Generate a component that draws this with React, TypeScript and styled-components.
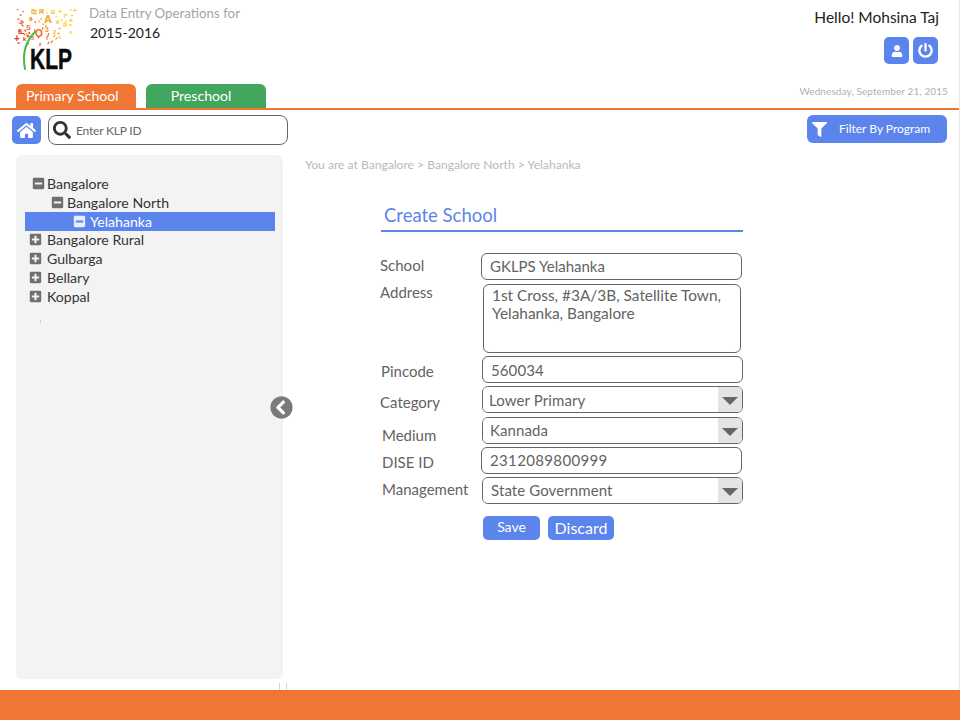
import { createGlobalStyle, styled } from "styled-components";
import {
  FaChevronCircleLeft,
  FaFilter,
  FaHome,
  FaMinusSquare,
  FaPlusSquare,
  FaPowerOff,
  FaSearch,
  FaUser,
} from "react-icons/fa";

const BLUE = "#5b84ec";
const ORANGE = "#f07636";

const GlobalStyle = createGlobalStyle`
  html, body {
    margin: 0;
    padding: 0;
    background: #fff;
    overflow: hidden;
  }
  body, input, textarea, select, button {
    font-family: Lato, "Liberation Sans", sans-serif;
  }
  * {
    box-sizing: border-box;
  }
`;

const Page = styled.div`
  position: relative;
  display: flex;
  flex-direction: column;
  width: 960px;
  height: 720px;
  border-right: 1px solid #e9e9e9;
`;

const Header = styled.header`
  display: flex;
  justify-content: space-between;
  height: 110px;
  border-bottom: 2px solid ${ORANGE};
`;

const HeaderLeft = styled.div`
  display: flex;
  flex-direction: column;
  padding: 6px 0 0 14px;
`;

const Brand = styled.div`
  display: flex;
  height: 78px;
`;

const BrandText = styled.div`
  padding-top: 0;
`;

const Caption = styled.div`
  font-size: 13.3px;
  line-height: 14px;
  color: #a4a4a4;
`;

const YearText = styled.div`
  font-size: 14px;
  line-height: 17px;
  margin: 4px 0 0 1px;
  color: #222;
`;

const Tabs = styled.div`
  display: flex;
  gap: 10px;
  padding-left: 2px;
`;

const Tab = styled.div<{ $color: string; $center?: boolean }>`
  width: 120px;
  height: 24px;
  padding: ${(p) => (p.$center ? "0 10px 0 0" : "0 0 0 10px")};
  border-radius: 6px 6px 0 0;
  background: ${(p) => p.$color};
  color: #fff;
  font-size: 14.1px;
  line-height: 23px;
  text-align: ${(p) => (p.$center ? "center" : "left")};
`;

const HeaderRight = styled.div`
  display: flex;
  flex-direction: column;
  align-items: flex-end;
  padding: 8px 11px 0 0;
`;

const Greeting = styled.div`
  font-size: 15.5px;
  line-height: 19px;
  margin-right: 9px;
  color: #222;
`;

const UserActions = styled.div`
  display: flex;
  gap: 4px;
  margin: 10px 10px 0 0;
`;

const IconButton = styled.div<{ $size: number }>`
  display: flex;
  align-items: center;
  justify-content: center;
  width: 25px;
  height: 27px;
  border-radius: 5px;
  background: ${BLUE};
  color: #fff;
  font-size: ${(p) => p.$size}px;
`;

const DateText = styled.div`
  margin-top: 21px;
  font-size: 10px;
  line-height: 12px;
  letter-spacing: 0.1px;
  color: #b0b0b0;
`;

const Toolbar = styled.div`
  display: flex;
  align-items: flex-start;
  height: 45px;
  padding: 5px 12px 0 12px;
`;

const HomeButton = styled.div`
  display: flex;
  align-items: center;
  justify-content: center;
  width: 29px;
  height: 28px;
  margin-top: 1px;
  border-radius: 5px;
  background: ${BLUE};
  color: #fff;
  font-size: 19px;
`;

const SearchBox = styled.div`
  display: flex;
  align-items: center;
  gap: 5px;
  width: 240px;
  height: 30px;
  margin-left: 7px;
  padding-left: 4px;
  border: 1px solid #666;
  border-radius: 8px;
  color: #333;
  font-size: 18px;
`;

const SearchInput = styled.input`
  flex: 1;
  min-width: 0;
  border: 0;
  outline: 0;
  padding: 0;
  background: transparent;
  font-size: 12px;
  letter-spacing: -0.2px;
  &::placeholder {
    color: #666;
    opacity: 1;
  }
`;

const FilterButton = styled.div`
  display: flex;
  align-items: center;
  width: 140px;
  height: 28px;
  margin-left: auto;
  padding: 0 0 2px 5px;
  border-radius: 6px;
  background: ${BLUE};
  color: #fff;
  font-size: 12px;
  svg {
    font-size: 15px;
    margin: 2px 12px 0 0;
  }
`;

const Body = styled.div`
  position: relative;
  flex: 1;
  display: flex;
  min-height: 0;
`;

const Sidebar = styled.aside`
  width: 267px;
  height: 524px;
  margin-left: 16px;
  padding: 19px 8px 0 9px;
  border-radius: 6px;
  background: #f3f3f3;
`;

const TreeRow = styled.div<{ $indent: number; $active?: boolean; $gap: number; $pull?: boolean }>`
  display: flex;
  align-items: center;
  gap: ${(p) => p.$gap}px;
  height: 19px;
  margin-top: ${(p) => (p.$pull ? -1 : 0)}px;
  padding-left: ${(p) => p.$indent}px;
  background: ${(p) => (p.$active ? BLUE : "transparent")};
  color: ${(p) => (p.$active ? "#fff" : "#333")};
  font-size: 14.1px;
  svg {
    flex: none;
    font-size: 13px;
    color: ${(p) => (p.$active ? "#e6ecfc" : "#6f6f6f")};
  }
`;

const CollapseHandle = styled.div`
  position: absolute;
  left: 270px;
  top: 241px;
  display: flex;
  color: #7a7a7a;
  font-size: 23px;
  background: #fff;
  border-radius: 50%;
`;

const Tick = styled.div<{ $left: number }>`
  position: absolute;
  left: ${(p) => p.$left}px;
  bottom: 0;
  width: 1px;
  height: 7px;
  background: #d4d4d4;
`;

const Speck = styled.div`
  position: absolute;
  left: 40px;
  top: 165px;
  width: 1px;
  height: 3px;
  background: #cfcfcf;
`;

const Content = styled.main`
  flex: 1;
  padding-left: 22px;
`;

const Breadcrumb = styled.div`
  margin-top: 2px;
  font-size: 12.1px;
  line-height: 15px;
  color: #b9b9b9;
`;

const Form = styled.form`
  width: 364px;
  margin: 29px 0 0 75px;
`;

const Title = styled.h2`
  margin: 0 0 21px 1px;
  padding: 1px 0 2px 3px;
  width: 362px;
  border-bottom: 2px solid ${BLUE};
  color: ${BLUE};
  font-size: 18.5px;
  font-weight: 400;
  line-height: 26px;
`;

const Row = styled.div<{ $top?: number }>`
  display: flex;
  align-items: flex-start;
  margin-top: ${(p) => p.$top ?? 0}px;
`;

const Label = styled.label<{ $left: number; $top: number; $fieldAt: number }>`
  flex: none;
  width: ${(p) => p.$fieldAt}px;
  margin-left: -2px;
  padding: ${(p) => p.$top}px 0 0 ${(p) => p.$left}px;
  color: #636363;
  font-size: 15px;
  line-height: 18px;
  white-space: nowrap;
`;

const TextInput = styled.input<{ $lift?: number; $spacing?: number }>`
  width: 261px;
  height: 27px;
  padding: 0 8px ${(p) => p.$lift ?? 0}px;
  border: 1px solid #666;
  border-radius: 6px;
  outline: 0;
  color: #636363;
  font-size: 15px;
  letter-spacing: ${(p) => p.$spacing ?? 0}px;
`;

const TextArea = styled.textarea`
  display: block;
  width: 258px;
  height: 69px;
  margin-top: 1px;
  padding: 1px 8px;
  border: 1px solid #666;
  border-radius: 6px;
  outline: 0;
  resize: none;
  overflow: hidden;
  color: #636363;
  font-size: 15.4px;
  line-height: 18px;
`;

const SelectWrap = styled.div`
  position: relative;
  width: 261px;
  height: 27px;
  border: 1px solid #666;
  border-radius: 6px;
  overflow: hidden;
`;

const Select = styled.select<{ $pad: number; $lift?: number }>`
  display: block;
  width: 100%;
  height: 100%;
  padding: 0 30px ${(p) => p.$lift ?? 0}px ${(p) => p.$pad}px;
  border: 0;
  outline: 0;
  appearance: none;
  background: #fff;
  color: #636363;
  font-size: 15px;
  letter-spacing: 0.1px;
`;

const Arrow = styled.span`
  position: absolute;
  right: 0;
  top: 0;
  bottom: 0;
  width: 24px;
  background: #e4e4e4;
  pointer-events: none;
  &::after {
    content: "";
    position: absolute;
    left: 4px;
    top: 10px;
    border-style: solid;
    border-width: 8px 8px 0 8px;
    border-color: #666 transparent transparent transparent;
  }
`;

const Actions = styled.div`
  display: flex;
  gap: 8px;
  margin: 12px 0 0 103px;
`;

const ActionButton = styled.button<{ $width: number; $size: number; $lift: number }>`
  width: ${(p) => p.$width}px;
  height: 24px;
  padding: 0 0 ${(p) => p.$lift}px;
  border: 0;
  border-radius: 5px;
  background: ${BLUE};
  color: #fff;
  font-size: ${(p) => p.$size}px;
  line-height: 20px;
`;

const Footer = styled.footer`
  flex: none;
  height: 30px;
  margin-right: -1px;
  background: ${ORANGE};
`;

// the dandelion head of the logo is made of small letters and digits
const LOGO_GLYPHS: [string, number, number, number, string][] = [
  ["A", 30, 17, 11, "#f5a21b"], ["O", 21, 31, 10, "#ee6a1e"], ["R", 25, 8, 7, "#f4a81c"],
  ["D", 17, 8, 7, "#f7b521"], ["8", 15, 15, 6, "#f08a20"], ["S", 12, 24, 7, "#ee6a1e"],
  ["4", 5, 19, 7, "#ee6a1e"], ["5", 4, 28, 7, "#ea4f1c"], ["+", 0, 36, 10, "#e8391a"],
  ["k", 9, 35, 6, "#e8391a"], ["5", 17, 34, 6, "#ee6a1e"], ["t", 32, 34, 6, "#f08a20"],
  ["3", 31, 26, 7, "#f3941f"], ["2", 39, 28, 6, "#f7b521"], ["9", 42, 18, 6, "#f8c223"],
  ["7", 49, 12, 6, "#fbd02a"], ["B", 37, 8, 6, "#f8c223"], ["+", 44, 8, 7, "#fbd02a"],
  ["E", 49, 21, 6, "#fbd02a"], ["o", 55, 28, 6, "#fbd02a"], ["i", 45, 33, 6, "#f7b521"],
  ["+", 55, 17, 7, "#f8c223"], ["+", 59, 7, 7, "#fbd02a"], ["c", 12, 30, 5, "#f3941f"],
];

// small specks between the glyphs
const SEEDS = Array.from({ length: 50 }, (_, i) => {
  const a = Math.abs(Math.sin(i * 12.9898) * 43758.5453) % 1;
  const b = Math.abs(Math.sin(i * 78.233) * 24634.6345) % 1;
  const x = 3 + Math.pow(a, 1.35) * 56;
  const y = 3 + b * (34 - (x > 40 ? (x - 40) * 0.9 : 0));
  const warm = x / 60 - (y - 20) / 60;
  const fill = warm < 0.3 ? "#e8431b" : warm < 0.5 ? "#ee6a1e" : warm < 0.75 ? "#f5a21b" : "#fbcf25";
  return { x, y, fill, rot: a * 180, w: 1.5 + b * 1.5 };
});

const Logo = () => (
  <svg width="75" height="72" viewBox="0 0 75 72" aria-label="KLP">
    {SEEDS.map((s, i) => (
      <rect
        key={i}
        x={s.x}
        y={s.y}
        width={s.w}
        height="1.2"
        fill={s.fill}
        transform={`rotate(${s.rot} ${s.x} ${s.y})`}
      />
    ))}
    {LOGO_GLYPHS.map(([ch, x, y, size, fill], i) => (
      <text key={i} x={x} y={y} fontSize={size} fontWeight="700" fill={fill} fontFamily="Liberation Sans, sans-serif">
        {ch}
      </text>
    ))}
    <path d="M21 26C12 35 8 48 11 63" fill="none" stroke="#4db848" strokeWidth="2" strokeLinecap="round" />
    <text
      x="16"
      y="63"
      fontSize="30"
      fontWeight="700"
      fill="#0a0a0a"
      stroke="#0a0a0a"
      strokeWidth="0.5"
      fontFamily="Liberation Sans, sans-serif"
      textLength="42"
      lengthAdjust="spacingAndGlyphs"
    >
      KLP
    </text>
  </svg>
);

const App = () => (
  <>
    <GlobalStyle />
    <Page>
      <Header>
        <HeaderLeft>
          <Brand>
            <Logo />
            <BrandText>
              <Caption>Data Entry Operations for</Caption>
              <YearText>2015-2016</YearText>
            </BrandText>
          </Brand>
          <Tabs>
            <Tab $color={ORANGE}>Primary School</Tab>
            <Tab $color="#43a65e" $center>Preschool</Tab>
          </Tabs>
        </HeaderLeft>
        <HeaderRight>
          <Greeting>Hello! Mohsina Taj</Greeting>
          <UserActions>
            <IconButton $size={12}><FaUser /></IconButton>
            <IconButton $size={15}><FaPowerOff /></IconButton>
          </UserActions>
          <DateText>Wednesday, September 21, 2015</DateText>
        </HeaderRight>
      </Header>

      <Toolbar>
        <HomeButton><FaHome /></HomeButton>
        <SearchBox>
          <FaSearch />
          <SearchInput placeholder="Enter KLP ID" />
        </SearchBox>
        <FilterButton>
          <FaFilter />
          <span>Filter By Program</span>
        </FilterButton>
      </Toolbar>

      <Body>
        <Sidebar>
          <TreeRow $indent={7} $gap={2}><FaMinusSquare />Bangalore</TreeRow>
          <TreeRow $indent={26} $gap={3}><FaMinusSquare />Bangalore North</TreeRow>
          <TreeRow $indent={48} $gap={4} $active><FaMinusSquare />Yelahanka</TreeRow>
          <TreeRow $indent={4} $gap={5} $pull><FaPlusSquare />Bangalore Rural</TreeRow>
          <TreeRow $indent={4} $gap={5}><FaPlusSquare />Gulbarga</TreeRow>
          <TreeRow $indent={4} $gap={5}><FaPlusSquare />Bellary</TreeRow>
          <TreeRow $indent={4} $gap={5}><FaPlusSquare />Koppal</TreeRow>
        </Sidebar>
        <Speck />
        <CollapseHandle><FaChevronCircleLeft /></CollapseHandle>
        <Tick $left={279} />
        <Tick $left={286} />

        <Content>
          <Breadcrumb>You are at Bangalore &gt; Bangalore North &gt; Yelahanka</Breadcrumb>
          <Form>
            <Title>Create School</Title>
            <Row>
              <Label $left={2} $top={3} $fieldAt={103}>School</Label>
              <TextInput $lift={2} defaultValue="GKLPS Yelahanka" />
            </Row>
            <Row $top={3}>
              <Label $left={2} $top={0} $fieldAt={105}>Address</Label>
              <TextArea defaultValue={"1st Cross, #3A/3B, Satellite Town, Yelahanka, Bangalore"} />
            </Row>
            <Row $top={3}>
              <Label $left={3} $top={6} $fieldAt={104}>Pincode</Label>
              <TextInput defaultValue="560034" $spacing={0.1} />
            </Row>
            <Row $top={3}>
              <Label $left={2} $top={7} $fieldAt={104}>Category</Label>
              <SelectWrap>
                <Select $pad={6} defaultValue="Lower Primary"><option>Lower Primary</option></Select>
                <Arrow />
              </SelectWrap>
            </Row>
            <Row $top={4}>
              <Label $left={4} $top={9} $fieldAt={104}>Medium</Label>
              <SelectWrap>
                <Select $pad={7} $lift={2} defaultValue="Kannada"><option>Kannada</option></Select>
                <Arrow />
              </SelectWrap>
            </Row>
            <Row $top={3}>
              <Label $left={4} $top={6} $fieldAt={103}>DISE ID</Label>
              <TextInput $lift={2} $spacing={0.35} defaultValue="2312089800999" />
            </Row>
            <Row $top={3}>
              <Label $left={4} $top={3} $fieldAt={104}>Management</Label>
              <SelectWrap>
                <Select $pad={8} $lift={2} defaultValue="State Government"><option>State Government</option></Select>
                <Arrow />
              </SelectWrap>
            </Row>
            <Actions>
              <ActionButton type="button" $width={57} $size={14} $lift={2}>Save</ActionButton>
              <ActionButton type="button" $width={66} $size={16} $lift={0}>Discard</ActionButton>
            </Actions>
          </Form>
        </Content>
      </Body>

      <Footer />
    </Page>
  </>
);

export default App;
